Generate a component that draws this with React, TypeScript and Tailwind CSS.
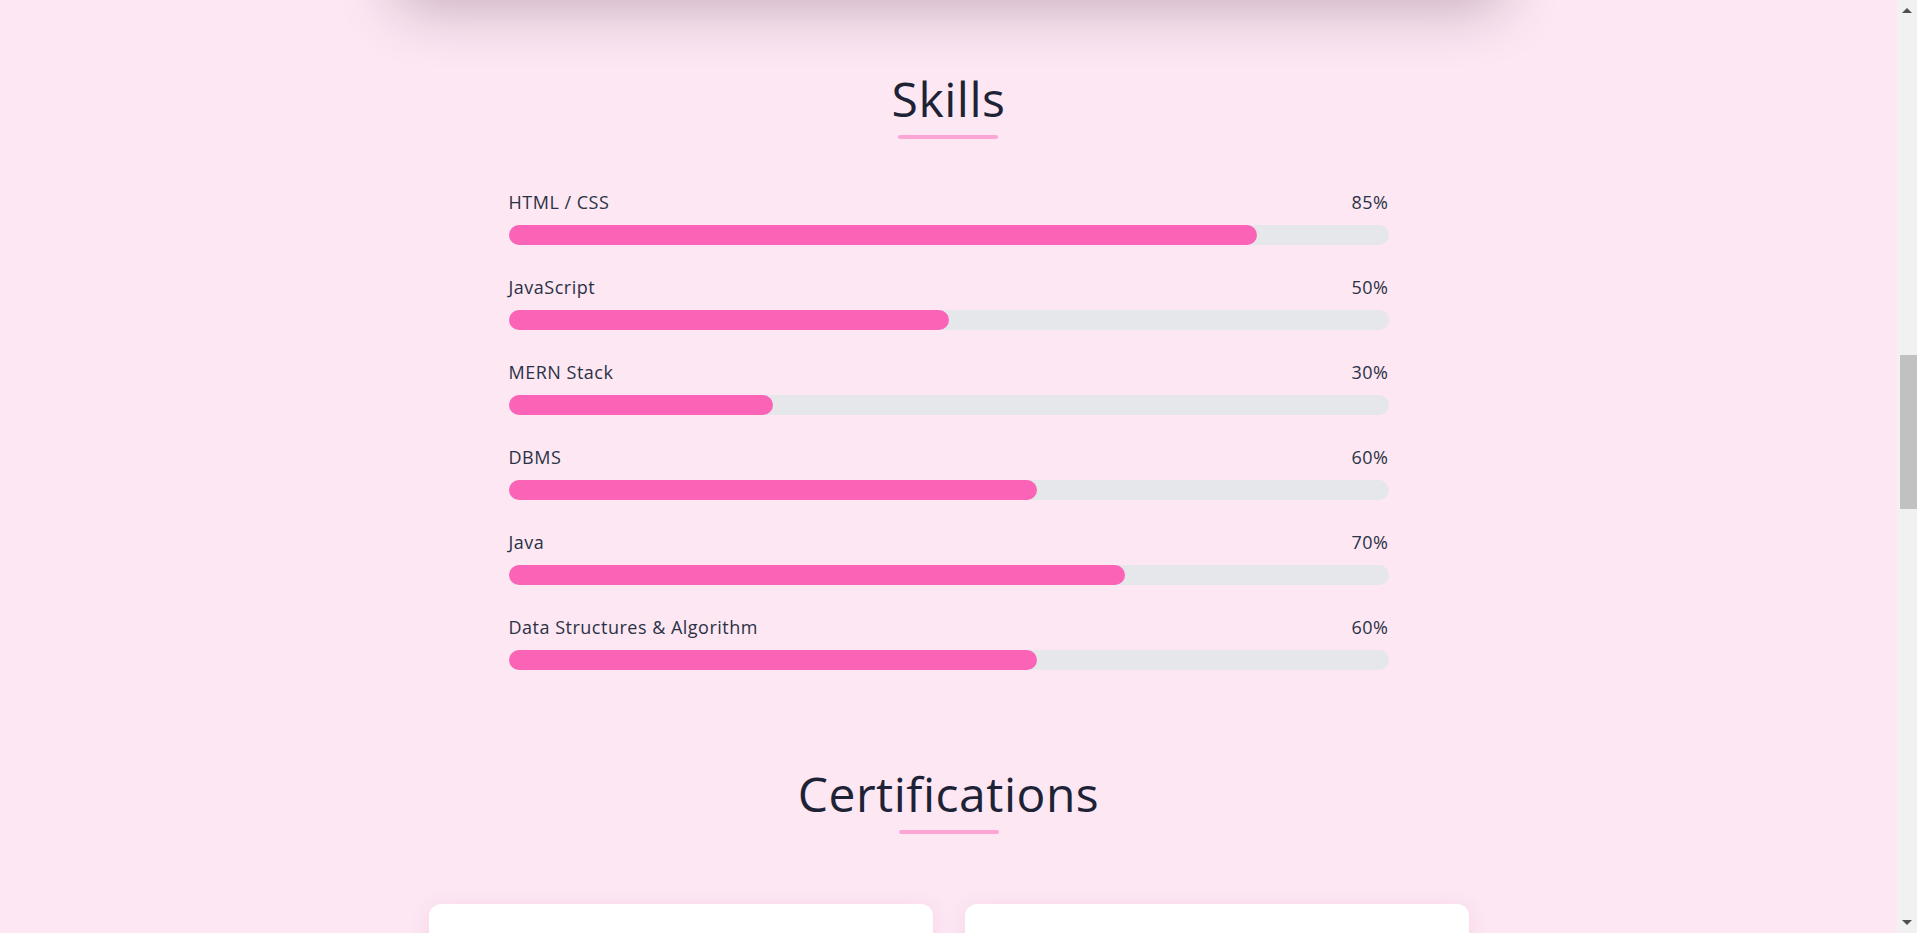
import React from "react";

const skills = [
  { name: "HTML / CSS", level: 85 },
  { name: "JavaScript", level: 50 },
  { name: "MERN Stack", level: 30 },
  { name: "DBMS", level: 60 },
  { name: "Java", level: 70 },
  { name: "Data Structures & Algorithm", level: 60 },
];

const certs = [
  { title: "Introduction to Full Stack Development", org: "Coursera" },
  { title: "Data Structures in Java", org: "NPTEL" },
];

function SkillBar({ name, level }: { name: string; level: number }) {
  return (
    <div className="flex flex-col">
      <div className="flex justify-between text-[18px] leading-[28px] tracking-[0.5px] text-[#2b3245] mb-[9px]">
        <span>{name}</span>
        <span>{level}%</span>
      </div>
      <div className="h-5 w-full rounded-full bg-[#e5e7eb]">
        <div className="h-5 rounded-full bg-[#fb64b6]" style={{ width: `${level}%` }} />
      </div>
    </div>
  );
}

function Heading({ children }: { children: React.ReactNode }) {
  return (
    <div className="flex flex-col items-center">
      <h2 className="text-[48px] leading-[48px] font-normal tracking-[0.5px] text-[#1e2235]">{children}</h2>
      <div className="mt-[12px] h-1 w-[100px] rounded-full bg-[#fda5d5]" />
    </div>
  );
}

function Scrollbar() {
  return (
    <div className="w-[20px] shrink-0 bg-[#f1f1f1] flex flex-col items-center">
      <div className="mt-[8px] h-0 w-0 border-x-[5px] border-b-[5px] border-x-transparent border-b-[#505050]" />
      <div className="mt-[342px] ml-[2px] h-[154px] w-[17px] bg-[#c1c1c1]" />
      <div className="flex-1" />
      <div className="mb-[8px] h-0 w-0 border-x-[5px] border-t-[5px] border-x-transparent border-t-[#505050]" />
    </div>
  );
}

export default function App() {
  return (
    <div className="flex h-[933px] overflow-hidden bg-[#fce7f3] font-['Open_Sans',sans-serif]">
      <main className="flex flex-1 flex-col items-center">
        <div className="-mt-[170px] h-40 w-[1120px] shrink-0 rounded-2xl bg-[#fce7f3] shadow-[0_25px_60px_-10px_rgba(60,20,50,0.3)]" />

        <section className="mt-[85px] flex w-full flex-col items-center">
          <Heading>Skills</Heading>
          <div className="mt-[49px] flex w-[880px] flex-col gap-[28px]">
            {skills.map((s) => (
              <SkillBar key={s.name} name={s.name} level={s.level} />
            ))}
          </div>
        </section>

        <section className="mt-[100px] flex w-full flex-col items-center">
          <Heading>Certifications</Heading>
          <div className="mt-[70px] grid w-[1040px] grid-cols-2 gap-8">
            {certs.map((c) => (
              <div key={c.title} className="rounded-xl bg-white px-6 pt-6 pb-8 text-center shadow-[0_4px_20px_rgba(236,72,153,0.12)]">
                <h3 className="text-[20px] leading-[28px] font-semibold text-[#1e2235]">{c.title}</h3>
                <p className="mt-2 text-[#4a5568]">{c.org}</p>
              </div>
            ))}
          </div>
        </section>
      </main>
      <Scrollbar />
    </div>
  );
}
